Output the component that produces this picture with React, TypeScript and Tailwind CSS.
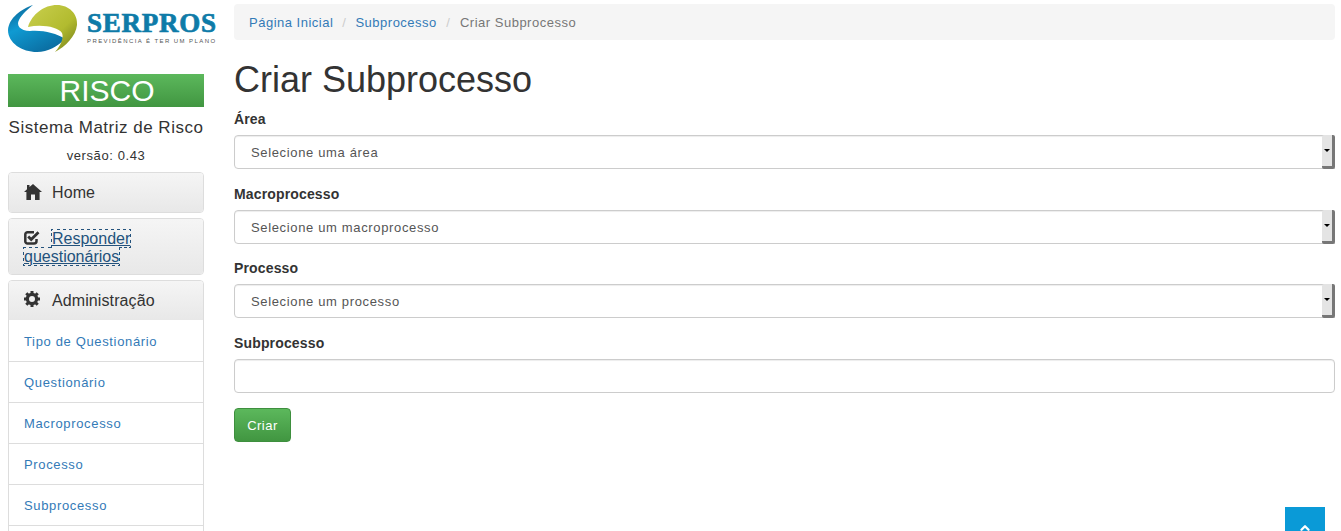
import { ChevronUp } from "lucide-react";

const adminLinks = [
  "Tipo de Questionário",
  "Questionário",
  "Macroprocesso",
  "Processo",
  "Subprocesso",
];

const Logo = () => (
  <div className="flex items-center h-[54px]">
    <svg width="70" height="54" viewBox="0 0 70 54" className="shrink-0">
      <defs>
        <linearGradient id="blue" x1="0" y1="0" x2="0.6" y2="1">
          <stop offset="0" stopColor="#0d5f8f" />
          <stop offset="0.45" stopColor="#0f9ad2" />
          <stop offset="1" stopColor="#0b6fa3" />
        </linearGradient>
        <linearGradient id="lime" x1="0" y1="0" x2="1" y2="1">
          <stop offset="0" stopColor="#c9cf4e" />
          <stop offset="0.6" stopColor="#b2bb2f" />
          <stop offset="1" stopColor="#6f7a1a" />
        </linearGradient>
      </defs>
      <path
        d="M25 5 C13 9 1 18 0 30 C0 43 14 52 29 52 C40 52 50 46 57 39 C48 33 35 30 22 31 C12 31 8 25 11 20 C14 14 20 9 25 5 Z"
        fill="url(#blue)"
      />
      <path
        d="M20 27 C24 14 36 5 49 5 C61 5 70 14 69 25 C68 36 57 47 47 52 C53 45 56 38 54 33 C50 27 34 24 20 27 Z"
        fill="url(#lime)"
      />
    </svg>
    <div className="ml-[9px] mt-[1px] flex flex-col">
      <span className="text-[27px] leading-[27px] font-bold text-[#0e7ba8] tracking-[0.75px] whitespace-nowrap [-webkit-text-stroke:0.7px_#0e7ba8] font-['Liberation_Serif',serif]">
        SERPROS
      </span>
      <span className="text-[6px] leading-[8px] text-[#555] tracking-[1.42px] whitespace-nowrap">
        PREVIDÊNCIA É TER UM PLANO
      </span>
    </div>
  </div>
);

const HomeIcon = () => (
  <svg width="18" height="16" viewBox="0 0 18 16" className="inline-block mr-[10px] align-[-2px]">
    <path d="M9 0 L18 8 L15.6 8 L15.6 16 L11 16 L11 10.5 L7 10.5 L7 16 L2.4 16 L2.4 8 L0 8 L3 5.3 L3 1 L5.5 1 L5.5 3.1 Z" fill="#333" />
  </svg>
);

const CheckIcon = () => (
  <svg width="16" height="15" viewBox="0 0 16 15" className="inline-block mr-[12px] align-[-1px]">
    <path d="M12.5 9 V11 A2.5 2.5 0 0 1 10 13.5 H3.5 A2.2 2.2 0 0 1 1.3 11 V4.5 A2.2 2.2 0 0 1 3.5 2.3 H10" fill="none" stroke="#333" strokeWidth="2.5" />
    <path d="M4.2 6.5 L7.2 9.5 L14.5 2.2" fill="none" stroke="#333" strokeWidth="2.8" />
  </svg>
);

const GearIcon = () => (
  <svg width="16" height="16" viewBox="0 0 16 16" className="inline-block mr-[12px] align-[-1px]">
    <circle cx="8" cy="8" r="4.6" fill="none" stroke="#333" strokeWidth="3.2" />
    <g stroke="#333" strokeWidth="3">
      <path d="M8 0 V3" />
      <path d="M8 13 V16" />
      <path d="M0 8 H3" />
      <path d="M13 8 H16" />
      <path d="M2.3 2.3 L4.4 4.4" />
      <path d="M11.6 11.6 L13.7 13.7" />
      <path d="M2.3 13.7 L4.4 11.6" />
      <path d="M11.6 4.4 L13.7 2.3" />
    </g>
  </svg>
);

const Sidebar = () => (
  <aside className="w-[196px] shrink-0">
    <Logo />
    <div className="mt-[20px] h-[33px] pl-[2px] bg-gradient-to-b from-[#5cb85c] to-[#419641] text-center text-[30px] leading-[33px] text-white tracking-normal">
      RISCO
    </div>
    <div className="mt-[11px] text-center text-[17px] leading-[20px] text-[#333] tracking-[0.5px] whitespace-nowrap">
      Sistema Matriz de Risco
    </div>
    <div className="mt-[9px] text-center text-[13px] leading-[18px] text-[#333] tracking-[0.6px]">
      versão: 0.43
    </div>
    <div className="mt-[7px] flex flex-col gap-[5px]">
      <div className="border border-[#ddd] rounded-[4px] overflow-hidden">
        <div className="bg-gradient-to-b from-[#f5f5f5] to-[#e8e8e8] px-[15px] py-[10px] text-[16px] leading-[19px] text-[#333] tracking-[0.1px]">
          <HomeIcon />
          Home
        </div>
      </div>
      <div className="border border-[#ddd] rounded-[4px] overflow-hidden">
        <div className="bg-gradient-to-b from-[#f5f5f5] to-[#e8e8e8] px-[15px] pt-[11px] pb-[8px] text-[16px] leading-[18px] text-[#23527c] tracking-normal">
          <CheckIcon />
          <span className="underline outline-1 outline-dotted outline-[#23527c]">
            Responder questionários
          </span>
        </div>
      </div>
      <div className="border border-[#ddd] rounded-[4px] overflow-hidden">
        <div className="bg-gradient-to-b from-[#f5f5f5] to-[#e8e8e8] px-[15px] py-[10px] text-[16px] leading-[19px] text-[#333] tracking-[0.1px]">
          <GearIcon />
          Administração
        </div>
        <ul>
          {adminLinks.map((link) => (
            <li
              key={link}
              className="h-[41px] px-[15px] pt-[2px] flex items-center border-t border-[#ddd] first:border-t-0 text-[13px] tracking-[0.65px] text-[#337ab7] bg-white"
            >
              {link}
            </li>
          ))}
          <li className="h-[41px] border-t border-[#ddd] bg-white" />
        </ul>
      </div>
    </div>
  </aside>
);

const SelectBox = ({ label }: { label: string }) => (
  <div className="h-[34px] border border-[#ccc] rounded-[4px] shadow-[inset_0_1px_1px_rgba(0,0,0,0.075)] bg-white flex items-stretch text-[13px] text-[#555] tracking-[0.65px]">
    <span className="pl-[16px] pt-[1.5px] flex-1 flex items-center">{label}</span>
    <span className="w-[13px] my-[-1px] mr-[-1px] bg-[#e4e4e4] border-r-[3px] border-b-[3px] border-[#777] rounded-[2px] flex items-center justify-center">
      <span className="border-x-[3px] border-x-transparent border-t-[3px] border-t-black" />
    </span>
  </div>
);

const Label = ({ children }: { children: React.ReactNode }) => (
  <label className="block text-[14px] leading-[19.5px] font-bold text-[#333] mb-[5.5px] tracking-[0.15px]">
    {children}
  </label>
);

export default function App() {
  return (
    <div className="relative h-screen overflow-hidden bg-white flex gap-[30px] pr-[6px] pl-[8px] tracking-[0.5px] font-['Liberation_Sans',Arial,sans-serif]">
      <Sidebar />
      <main className="flex-1 min-w-0 pt-[4px]">
        <nav className="h-[36px] bg-[#f5f5f5] rounded-[4px] px-[15px] pt-px flex items-center text-[13px]">
          <span className="text-[#337ab7]">Página Inicial</span>
          <span className="text-[#ccc] px-[9px]">/</span>
          <span className="text-[#337ab7]">Subprocesso</span>
          <span className="text-[#ccc] px-[9.5px]">/</span>
          <span className="text-[#777]">Criar Subprocesso</span>
        </nav>
        <h1 className="mt-[20px] text-[36px] leading-[40px] font-normal text-[#333] tracking-normal">
          Criar Subprocesso
        </h1>
        <form className="mt-[10px] flex flex-col">
          <div className="mb-[15.67px]">
            <Label>Área</Label>
            <SelectBox label="Selecione uma área" />
          </div>
          <div className="mb-[15.67px]">
            <Label>Macroprocesso</Label>
            <SelectBox label="Selecione um macroprocesso" />
          </div>
          <div className="mb-[15.67px]">
            <Label>Processo</Label>
            <SelectBox label="Selecione um processo" />
          </div>
          <div className="mb-[15px]">
            <Label>Subprocesso</Label>
            <div className="h-[34px] border border-[#ccc] rounded-[4px] shadow-[inset_0_1px_1px_rgba(0,0,0,0.075)] bg-white" />
          </div>
          <div>
            <button
              type="button"
              className="h-[34px] w-[57px] pt-px rounded-[4px] border border-[#3e8f3e] bg-gradient-to-b from-[#5cb85c] to-[#419641] text-[13px] text-white"
            >
              Criar
            </button>
          </div>
        </form>
      </main>
      <div className="absolute right-[16px] bottom-0 w-[40px] h-[24px] bg-[#0a9ad7] flex justify-center pt-[14px]">
        <ChevronUp size={14} strokeWidth={4} className="text-white" />
      </div>
    </div>
  );
}
